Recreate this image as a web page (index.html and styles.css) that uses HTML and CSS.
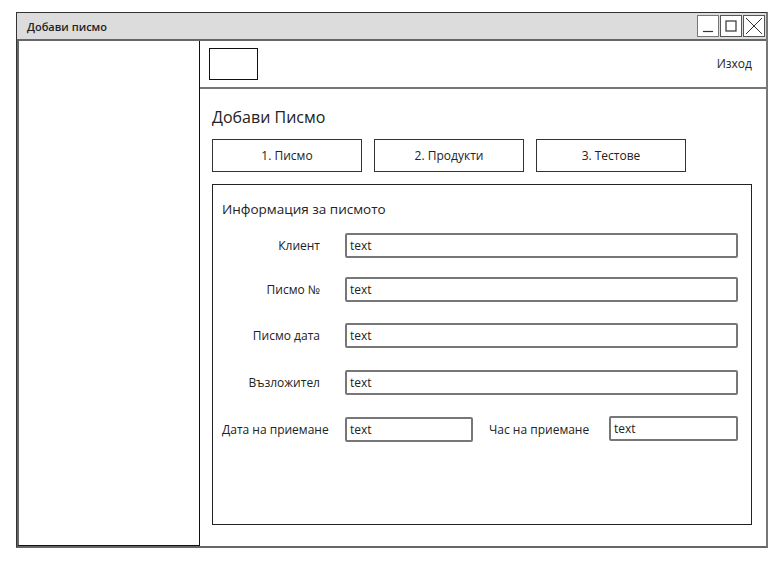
FILE: index.html
```html
<!DOCTYPE html>
<html lang="bg">
<head>
<meta charset="utf-8">
<title>Добави писмо</title>
<link rel="stylesheet" href="styles.css">
</head>
<body>
<div class="window">
  <div class="titlebar">
    <span class="title">Добави писмо</span>
    <div class="controls">
      <span class="ctl"><svg width="20" height="20" viewBox="0 0 20 20"><line x1="5" y1="15.5" x2="15" y2="15.5" stroke="#333" stroke-width="1.2"/></svg></span>
      <span class="ctl"><svg width="20" height="20" viewBox="0 0 20 20"><rect x="5" y="5" width="10" height="10" fill="none" stroke="#333" stroke-width="1.2"/></svg></span>
      <span class="ctl"><svg width="20" height="20" viewBox="0 0 20 20"><path d="M2 2 L18 18 M18 2 L2 18" stroke="#333" stroke-width="1"/></svg></span>
    </div>
  </div>
  <div class="body">
    <aside class="sidebar"></aside>
    <main class="main">
      <header class="topbar">
        <div class="logo"></div>
        <a class="logout">Изход</a>
      </header>
      <section class="content">
        <h1 class="heading">Добави Писмо</h1>
        <div class="tabs">
          <div class="tab">1. Писмо</div>
          <div class="tab">2. Продукти</div>
          <div class="tab">3. Тестове</div>
        </div>
        <div class="panel">
          <div class="panel-title">Информация за писмото</div>
          <div class="row"><label class="lbl">Клиент</label><div class="input">text</div></div>
          <div class="row"><label class="lbl">Писмо №</label><div class="input">text</div></div>
          <div class="row"><label class="lbl">Писмо дата</label><div class="input">text</div></div>
          <div class="row"><label class="lbl">Възложител</label><div class="input">text</div></div>
          <div class="row last">
            <label class="lbl left">Дата на приемане</label><div class="input short">text</div>
            <label class="lbl time">Час на приемане</label><div class="input">text</div>
          </div>
        </div>
      </section>
    </main>
  </div>
</div>
</body>
</html>
```
FILE: styles.css
```css
* { box-sizing: border-box; }
html, body { margin: 0; background: #fff; }
body {
  padding: 12px 0 0 16px;
  font-family: "Open Sans", "DejaVu Sans", sans-serif;
  color: #222;
}
.window {
  width: 752px;
  height: 536px;
  border: 1px solid #333;
  border-right: 2px solid #777;
  border-bottom: 2px solid #666;
  display: flex;
  flex-direction: column;
}
.titlebar {
  height: 28px;
  background: #dcdcdc;
  border-bottom: 2px solid #666;
  display: flex;
  align-items: center;
  justify-content: space-between;
  padding: 0 1px 0 10px;
}
.title { font-size: 11px; font-weight: 600; color: #222; }
.controls { display: flex; gap: 1px; }
.ctl {
  width: 22px; height: 22px;
  border: 1px solid #555;
  background: #fff;
  display: flex; align-items: center; justify-content: center;
}
.ctl:first-child { border-color: #777; }
.body { flex: 1; display: flex; min-height: 0; }
.sidebar {
  width: 183px;
  border-left: 2px solid #666;
  border-right: 1px solid #111;
  border-bottom: 1px solid #111;
  background: #fff;
}
.main { flex: 1; display: flex; flex-direction: column; }
.topbar {
  height: 48px;
  border-bottom: 2px solid #777;
  display: flex;
  align-items: flex-start;
  justify-content: space-between;
  padding: 7px 14px 0 9px;
}
.logo { width: 49px; height: 32px; border: 1px solid #111; }
.logout { font-size: 12px; color: #222; margin-top: 7px; }
.content { padding: 18px 14px 0 12px; }
.heading {
  margin: 0 0 12px 0;
  font-size: 16px;
  font-weight: 400;
  line-height: 20px;
  color: #222;
}
.tabs { display: flex; gap: 12px; margin-bottom: 12px; }
.tab {
  width: 150px; height: 33px;
  border: 1px solid #333;
  display: flex; align-items: center; justify-content: center;
  font-size: 12px;
}
.panel {
  width: 540px;
  height: 341px;
  border: 1px solid #222;
  padding: 15px 13px 0 9px;
}
.panel-title { font-size: 13.5px; line-height: 18px; margin-bottom: 15px; }
.row { display: flex; align-items: center; }
.row:nth-child(2) { margin-bottom: 19px; }
.row:nth-child(3) { margin-bottom: 21px; }
.row:nth-child(4) { margin-bottom: 22px; }
.row:nth-child(5) { margin-bottom: 22px; }
.lbl {
  width: 98px;
  margin-right: 25px;
  text-align: right;
  font-size: 12px;
}
.lbl.left { text-align: left; width: 112px; margin-right: 11px; white-space: nowrap; }
.lbl.time { text-align: left; width: 120px; margin: 0 0 0 16px; white-space: nowrap; }
.input {
  flex: 1;
  height: 25px;
  border: 2px solid #777;
  border-radius: 2px;
  padding: 0 3px;
  font-size: 12px;
  display: flex; align-items: center;
}
.input.short { flex: 0 0 128px; }
.last .input:last-child { margin-top: -2px; }
```
